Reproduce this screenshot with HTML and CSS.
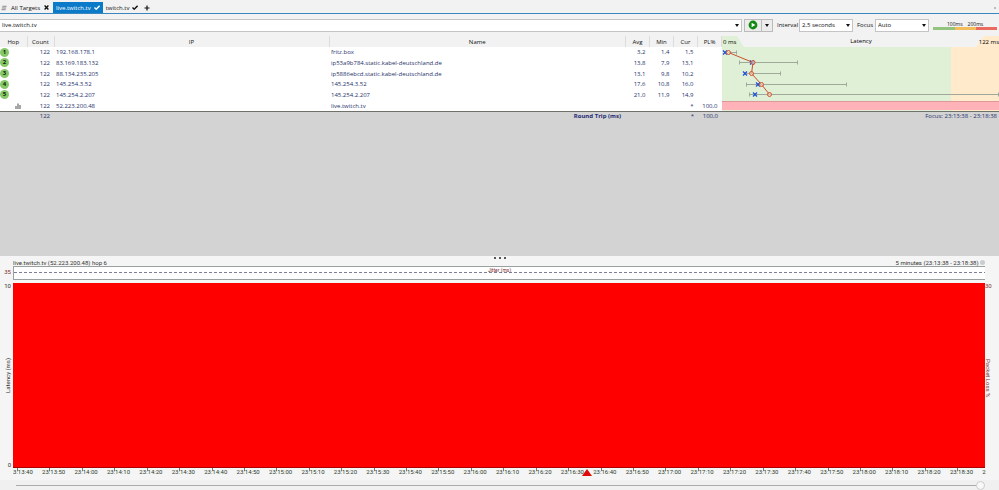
FILE: index.html
```html
<!DOCTYPE html>
<html lang="en">
<head>
    <meta charset="UTF-8">
    <meta name="viewport" content="width=device-width, initial-scale=1.0">
    <title>live.twitch.tv</title>
    <link rel="stylesheet" href="styles.css">
</head>
<body>
    <nav class="tabs">
        <button class="tab tab-all">
            <svg class="icon" width="6" height="6" viewBox="0 0 7 6"><path d="M1.5 1H6.5M1 3H6M.5 5H5.5" stroke="#777" fill="none"/></svg>
            All Targets
            <svg class="icon close" width="5" height="5" viewBox="0 0 5 5"><path d="M.6 .6L4.4 4.4M4.4 .6L.6 4.4" stroke="#111" stroke-width="1.4"/></svg>
        </button>
        <button class="tab active">
            live.twitch.tv
            <svg class="icon" width="6" height="5" viewBox="0 0 6 5"><path d="M.5 2.5L2.2 4.2L5.6 .8" stroke="#fff" stroke-width="1.4" fill="none"/></svg>
        </button>
        <button class="tab">
            twitch.tv
            <svg class="icon" width="6" height="5" viewBox="0 0 6 5"><path d="M.5 2.5L2.2 4.2L5.6 .8" stroke="#111" stroke-width="1.4" fill="none"/></svg>
        </button>
        <button class="tab tab-add" aria-label="New tab">
            <svg class="icon" width="6" height="6" viewBox="0 0 6 6"><path d="M3 .5V5.5M.5 3H5.5" stroke="#111" stroke-width="1.2"/></svg>
        </button>
        <span class="tabs-more"></span>
    </nav>

    <div class="toolbar">
        <div class="combo target">
            <input type="text" value="live.twitch.tv" aria-label="Target">
        </div>
        <div class="split">
            <button class="play" aria-label="Start">
                <svg class="icon" width="10" height="10" viewBox="0 0 10 10"><circle cx="5" cy="5" r="4.4" fill="#128a12"/><path d="M3.6 2.8V7.2L7.4 5Z" fill="#fff"/></svg>
            </button>
            <button class="split-arrow" aria-label="Start options"></button>
        </div>
        <label class="interval-label" for="interval">Interval</label>
        <div class="combo">
            <select id="interval"><option>2,5 seconds</option></select>
        </div>
        <label class="focus-label" for="focus">Focus</label>
        <div class="combo">
            <select id="focus"><option>Auto</option></select>
        </div>
        <div class="legend">
            <div class="legend-text"><span>100ms</span><span>200ms</span></div>
            <div class="legend-bar"></div>
        </div>
    </div>

    <main class="trace">
        <div class="hops">
            <table>
                <colgroup>
                    <col class="c-hop"><col class="c-count"><col class="c-ip"><col class="c-name">
                    <col class="c-num"><col class="c-num"><col class="c-num"><col class="c-num">
                </colgroup>
                <thead>
                    <tr><th>Hop</th><th>Count</th><th>IP</th><th>Name</th><th>Avg</th><th>Min</th><th>Cur</th><th>PL%</th></tr>
                </thead>
                <tbody>
                    <tr><td><b class="hop">1</b></td><td class="num">122</td><td>192.168.178.1</td><td>fritz.box</td><td class="num">3,2</td><td class="num">1,4</td><td class="num">1,5</td><td class="num"></td></tr>
                    <tr><td><b class="hop">2</b></td><td class="num">122</td><td>83.169.183.132</td><td>ip53a9b784.static.kabel-deutschland.de</td><td class="num">13,8</td><td class="num">7,9</td><td class="num">13,1</td><td class="num"></td></tr>
                    <tr><td><b class="hop">3</b></td><td class="num">122</td><td>88.134.235.205</td><td>ip5886ebcd.static.kabel-deutschland.de</td><td class="num">13,1</td><td class="num">9,8</td><td class="num">10,2</td><td class="num"></td></tr>
                    <tr><td><b class="hop">4</b></td><td class="num">122</td><td>145.254.3.52</td><td>145.254.3.52</td><td class="num">17,6</td><td class="num">10,8</td><td class="num">16,0</td><td class="num"></td></tr>
                    <tr><td><b class="hop">5</b></td><td class="num">122</td><td>145.254.2.207</td><td>145.254.2.207</td><td class="num">21,0</td><td class="num">11,9</td><td class="num">14,9</td><td class="num"></td></tr>
                    <tr><td class="bars"><svg class="icon" width="6" height="6" viewBox="0 0 6 6"><path d="M1 6V3M3 6V.5M5 6V2" stroke="#777" stroke-width="1.3"/></svg></td><td class="num">122</td><td>52.223.200.48</td><td>live.twitch.tv</td><td class="num"></td><td class="num"></td><td class="num">*</td><td class="num">100,0</td></tr>
                </tbody>
            </table>
            <svg class="latency" width="277" height="75" viewBox="0 0 277 75">
                <rect width="277" height="75" fill="#dff0d6"/>
                <rect x="229" width="48" height="75" fill="#ffebcc"/>
                <path d="M15 0H262L254 11H22Z" fill="#f2f2f2"/>
                <rect y="65" width="277" height="9" fill="#ffb3b9"/>
                <path d="M0 65.500H277" stroke="#d99"/>
                <g stroke="#a0a89c" fill="none">
                    <path d="M8 16.500H14.500M14.500 14.500V18.500"/>
                    <path d="M17.500 26.500H75.500M17.500 24.500V28.500M75.500 24.500V28.500"/>
                    <path d="M22 37.500H58.500M58.500 35.500V39.500"/>
                    <path d="M24.500 48.500H124.500M24.500 46.500V50.500M124.500 46.500V50.500"/>
                    <path d="M27.500 58.500H276.500M27.500 56.500V60.500M276.500 56.500V60.500"/>
                </g>
                <path d="M6.500 16.500L31 26.500L29.500 37.500L39.500 48.500L47.500 58.500" stroke="#c8502d" fill="none"/>
                <g stroke="#1d4fd8" stroke-width="1.2">
                    <path d="M1 14.500l4 4m0-4l-4 4"/>
                    <path d="M28 24.500l4 4m0-4l-4 4"/>
                    <path d="M21 35.500l4 4m0-4l-4 4"/>
                    <path d="M34 46.500l4 4m0-4l-4 4"/>
                    <path d="M31 56.500l4 4m0-4l-4 4"/>
                </g>
                <g stroke="#d2542e" fill="#f6ddc6" fill-opacity=".6">
                    <circle cx="6.500" cy="16.500" r="2"/>
                    <circle cx="31" cy="26.500" r="2"/>
                    <circle cx="29.500" cy="37.500" r="2"/>
                    <circle cx="39.500" cy="48.500" r="2"/>
                    <circle cx="47.500" cy="58.500" r="2"/>
                </g>
                <text x="1" y="8">0 ms</text>
                <text class="title" x="139" y="7" text-anchor="middle">Latency</text>
                <text x="277" y="8" text-anchor="end">122 ms</text>
            </svg>
        </div>
        <div class="summary">
            <span class="s-count">122</span>
            <span class="s-title">Round Trip (ms)</span>
            <span class="s-cur">*</span>
            <span class="s-pl">100,0</span>
            <span class="s-focus">Focus: 23:13:38 - 23:18:38</span>
        </div>
    </main>

    <section class="timeline">
        <div class="grip"><i></i><i></i><i></i></div>
        <div class="timeline-head">
            <span>live.twitch.tv (52.223.200.48) hop 6</span>
            <span>5 minutes (23:13:38 - 23:18:38) <button class="range" aria-label="Range"></button></span>
        </div>
        <div class="jitter-row">
            <span class="jitter-max">35</span>
            <div class="jitter"><span>Jitter (ms)</span></div>
        </div>
        <div class="plot-row">
            <div class="axis left"><span>10</span><span class="vertical flip">Latency (ms)</span><span>0</span></div>
            <div class="plot"></div>
            <div class="axis right"><span>30</span><span class="vertical">Packet Loss %</span><span></span></div>
        </div>
        <div class="times-row">
            <div class="times" id="times"></div>
            <svg class="marker" width="10" height="7" viewBox="0 0 10 7"><path d="M5 0L10 7H0Z" fill="#e00b0b"/></svg>
        </div>
        <div class="scroll">
            <input type="range" min="0" max="100" value="100" aria-label="Time position">
        </div>
    </section>

    <script>
        // One label every ten seconds, starting at 23:13:40
        const times = document.getElementById('times');
        for (let i = 0; i <= 30; i++) {
            const t = 13 * 60 + 40 + i * 10;
            const label = document.createElement('span');
            label.textContent = '23:' + Math.floor(t / 60) + ':' + String(t % 60).padStart(2, '0');
            times.appendChild(label);
        }
    </script>
</body>
</html>
```
FILE: styles.css
```css
* {
    box-sizing: border-box;
}
body {
    margin: 0;
    min-height: 100vh;
    display: flex;
    flex-direction: column;
    background: #f2f2f2;
    color: #111;
    font-family: "Open Sans", "Noto Sans", sans-serif;
    font-size: 6px;
    line-height: 10px;
}
button, input, select {
    margin: 0;
    padding: 0;
    border: 0;
    background: none;
    color: inherit;
    font: inherit;
}
.icon {
    display: block;
    flex: none;
}

/* tabs */
.tabs {
    display: flex;
    height: 14px;
    padding-top: 2px;
    border-bottom: 1px solid #3a87bd;
}
.tab {
    display: flex;
    align-items: center;
    gap: 3px;
    padding: 0 3px;
}
.tab-all {
    width: 53px;
    gap: 4px;
    padding: 0 0 0 1px;
}
.tab.active {
    background: #0b7bc9;
    color: #fff;
}
.tabs-more {
    width: 2px;
    height: 2px;
    margin: 5px 3px 0 auto;
    background: #bbb;
}

/* toolbar */
.toolbar {
    display: flex;
    align-items: center;
    height: 22px;
    padding-right: 2px;
}
.combo {
    position: relative;
    width: 54px;
    height: 13px;
    border: 1px solid #c4c4c4;
    background: #fff;
}
.combo input, .combo select {
    display: block;
    width: 100%;
    height: 11px;
    padding: 0 2px;
    appearance: none;
}
.combo::after, .split-arrow::after {
    content: "";
    position: absolute;
    right: 2px;
    top: 4px;
    border: 2px solid transparent;
    border-top: 3px solid #111;
    border-bottom: 0;
    pointer-events: none;
}
.target {
    flex: 1;
    border-left: 0;
}
.split {
    display: flex;
    width: 29px;
    height: 13px;
    margin: 0 4px 0 2px;
    border: 1px solid #bbb;
    background: #ececec;
}
.play {
    display: flex;
    align-items: center;
    justify-content: center;
    width: 17px;
    border-right: 1px solid #bbb;
}
.split-arrow {
    position: relative;
    flex: 1;
}
.split-arrow::after {
    right: 3px;
}
.interval-label {
    width: 22px;
}
.focus-label {
    width: 18px;
    margin-left: 4px;
}
.legend {
    width: 64px;
    margin-left: 4px;
}
.legend-text {
    display: flex;
    gap: 5px;
    padding-left: 14px;
    font-size: 5px;
    line-height: 6px;
}
.legend-bar {
    height: 3px;
    background: linear-gradient(90deg, #92c47d 0 34%, #f3bd5c 34% 67%, #ea6a5f 67%);
}

/* hop table */
.trace {
    flex: 220 1 0;
    background: #d3d3d3;
    color: #26316a;
}
.hops {
    display: flex;
    background: #fff;
    border-bottom: 1px solid #6f706a;
}
table {
    flex: 1;
    height: 75px;
    table-layout: fixed;
    border-collapse: collapse;
}
.c-hop, .c-count {
    width: 27px;
}
.c-ip {
    width: 275px;
}
.c-num {
    width: 24px;
}
th {
    height: 11px;
    padding: 0;
    background: #f2f2f2;
    border-right: 1px solid #dcdcdc;
    color: #111;
    font-weight: normal;
}
td {
    padding: 0 2px;
    white-space: nowrap;
}
td.num {
    padding-right: 4px;
    text-align: right;
}
td:first-child {
    padding: 0;
}
td.bars {
    padding-left: 15px;
}
.hop {
    display: block;
    width: 9px;
    height: 9px;
    border-radius: 50%;
    background: #86c768;
    color: #0c2406;
    line-height: 9px;
    text-align: center;
}
.latency {
    display: block;
    flex: none;
}
.summary {
    display: flex;
    height: 9px;
    line-height: 8px;
}
.summary span {
    text-align: right;
}
.s-count {
    width: 50px;
}
.s-title {
    flex: 1;
    color: #1d2a75;
    font-weight: bold;
}
.s-cur {
    width: 73px;
}
.s-pl {
    width: 24px;
}
.s-focus {
    width: 279px;
    margin-right: 2px;
}

/* timeline */
.timeline {
    flex: 234 1 0;
    display: flex;
    flex-direction: column;
    background: #f5f5f5;
    color: #333;
    font-family: Roboto, "Open Sans", sans-serif;
}
.grip {
    display: flex;
    justify-content: center;
    gap: 3px;
    height: 3px;
    padding-top: 1px;
}
.grip i {
    width: 2px;
    height: 2px;
    background: #555;
}
.timeline-head {
    display: flex;
    justify-content: space-between;
    height: 7px;
    margin: 0 14px 0 13px;
    line-height: 7px;
}
.range {
    width: 5px;
    height: 5px;
    border-radius: 50%;
    background: #ccc;
}
.jitter-row {
    display: flex;
    margin: 0 14px 3px 0;
}
.jitter-max {
    width: 13px;
    padding-right: 2px;
    line-height: 12px;
    text-align: right;
    color: #803030;
}
.jitter {
    flex: 1;
    height: 14px;
    border: 1px solid #9a9f9f;
    border-right: 0;
    background: linear-gradient(#fff, #fff) 0 0 / 100% 5px no-repeat,
        linear-gradient(#fff, #fff) 0 6px / 100% 6px no-repeat,
        repeating-linear-gradient(90deg, #7d7d95 0 3px, #fff 3px 5px);
    text-align: center;
    font-size: 5px;
    line-height: 6px;
    color: #803030;
}
.plot-row {
    flex: 1;
    display: flex;
}
.plot {
    flex: 1;
    background: #f00;
    border-bottom: 1px solid #a00;
}
.axis {
    display: flex;
    flex-direction: column;
    justify-content: space-between;
    line-height: 6px;
}
.left {
    width: 13px;
    padding-right: 2px;
    align-items: flex-end;
}
.right {
    width: 14px;
    align-items: flex-start;
    color: #803030;
}
.vertical {
    writing-mode: vertical-rl;
}
.flip {
    transform: rotate(180deg);
}
.times-row {
    position: relative;
    margin: 0 13px;
}
.times {
    display: flex;
    height: 12px;
    overflow: hidden;
    line-height: 8px;
    color: #2c3c2c;
}
.times span {
    position: relative;
    flex: 0 0 calc(100% / 30);
    text-align: center;
}
.times span:first-child {
    margin-left: -8px;
}
/* tick mark */
.times span::before {
    content: "";
    position: absolute;
    left: 12px;
    top: 0;
    width: 1px;
    height: 3px;
    background: #777;
}
.marker {
    position: absolute;
    left: 59%;
    top: 1px;
    margin-left: -5px;
}
.scroll {
    height: 10px;
    padding: 0 14px 0 16px;
    background: #f0f0f0;
}
.scroll input {
    display: block;
    width: 100%;
    height: 10px;
    appearance: none;
    background: linear-gradient(#aaa, #aaa) 0 5px / 100% 1px no-repeat;
}
.scroll input::-webkit-slider-thumb {
    appearance: none;
    width: 9px;
    height: 9px;
    border: 1px solid #ccc;
    border-radius: 50%;
    background: #f8f8f8;
}
```
